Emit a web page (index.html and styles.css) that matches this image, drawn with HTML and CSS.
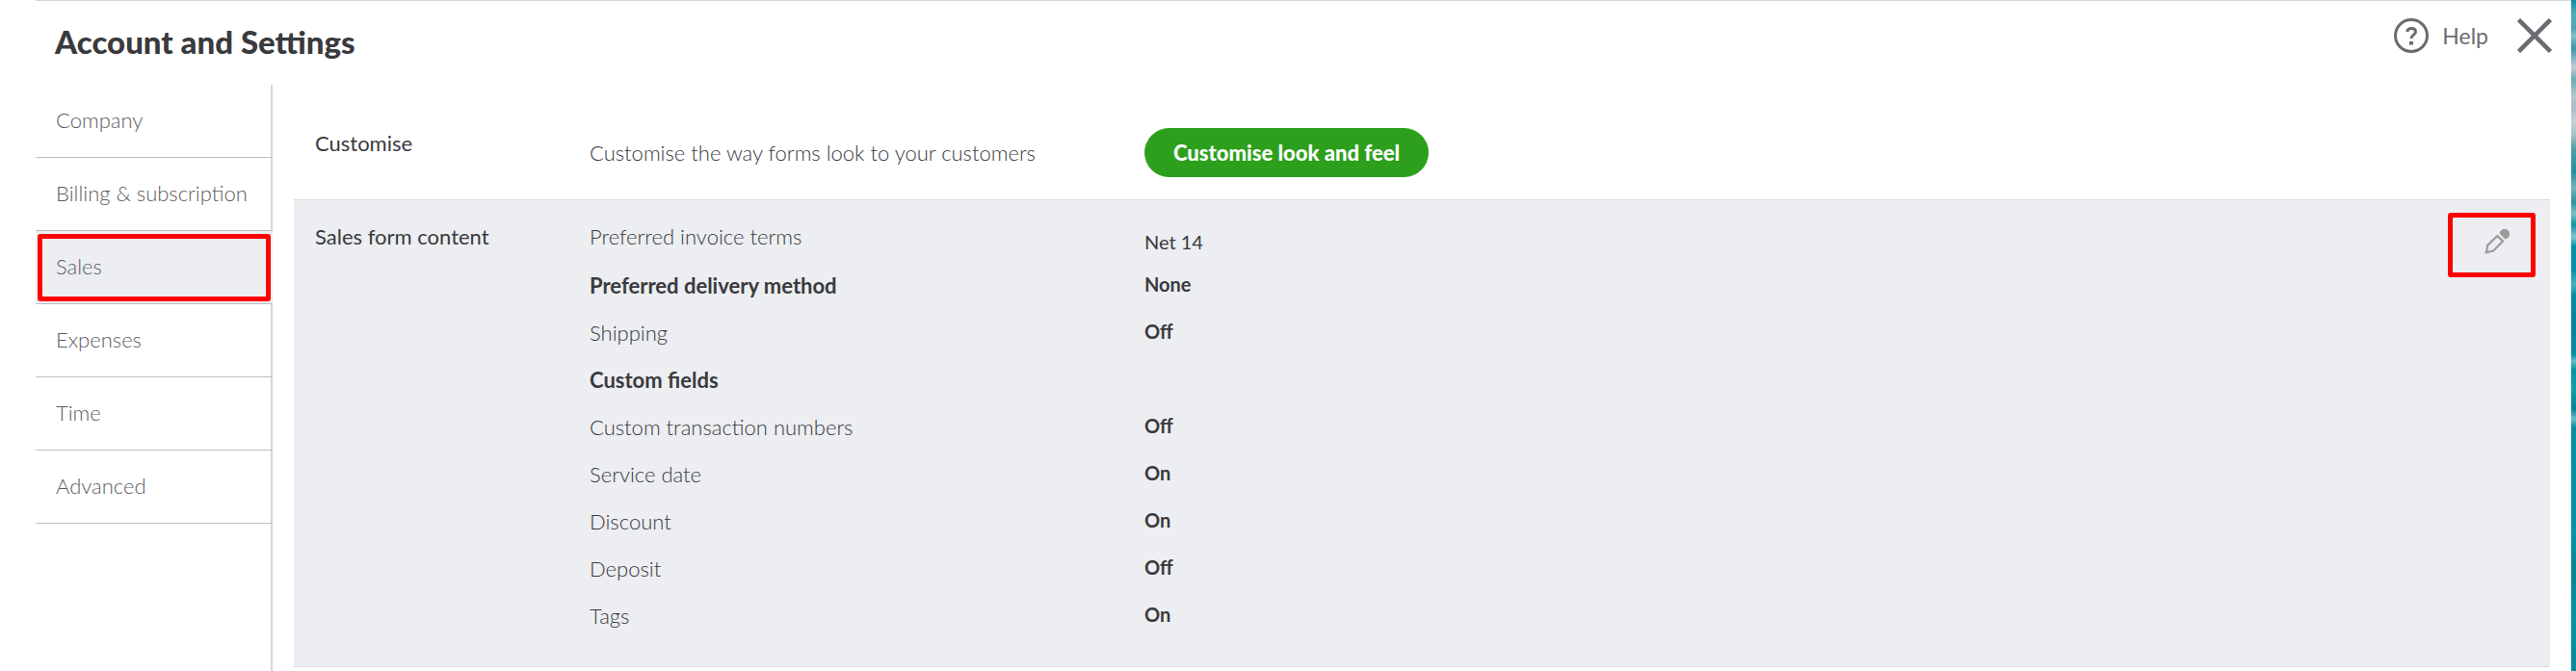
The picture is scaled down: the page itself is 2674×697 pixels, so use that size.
FILE: index.html
```html
<!DOCTYPE html>
<html lang="en">
<head>
<meta charset="utf-8">
<title>Account and Settings</title>
<link rel="stylesheet" href="styles.css">
</head>
<body>
<div class="app">
  <div class="dialog">
    <header class="header">
      <h1 class="title">Account and Settings</h1>
      <div class="actions">
        <a class="help" href="#help">
          <svg class="icon-help" viewBox="0 0 36 36" aria-hidden="true">
            <circle cx="18" cy="18" r="16.5" fill="none" stroke="#6b6c72" stroke-width="3"/>
            <path d="M13.700 13.900c.4-2.200 2-3.400 4.500-3.400 2.700 0 4.300 1.400 4.300 3.500 0 3.600-4.500 3-4.500 7" fill="none" stroke="#6b6c72" stroke-width="3"/>
            <path d="M16 24h4v3.600h-4z" fill="#6b6c72"/>
          </svg>
          <span>Help</span>
        </a>
        <button class="close" type="button" aria-label="Close">
          <svg class="icon-close" viewBox="0 0 36 36" aria-hidden="true">
            <path d="M1.500 1.500l33 33M34.500 1.500l-33 33" stroke="#6b6c72" stroke-width="4.500"/>
          </svg>
        </button>
      </div>
    </header>
    <div class="body">
      <nav class="sidebar" aria-label="Settings">
        <a class="tab" href="#company">Company</a>
        <a class="tab" href="#billing">Billing &amp; subscription</a>
        <a class="tab tab-active" href="#sales" aria-current="page">Sales</a>
        <a class="tab" href="#expenses">Expenses</a>
        <a class="tab" href="#time">Time</a>
        <a class="tab" href="#advanced">Advanced</a>
      </nav>
      <main class="content">
        <section class="section customise">
          <h2 class="section-title">Customise</h2>
          <p class="description">Customise the way forms look to your customers</p>
          <div><button class="primary" type="button">Customise look and feel</button></div>
        </section>
        <section class="section form-content">
          <h2 class="section-title">Sales form content</h2>
          <dl class="settings">
            <div class="row first"><dt>Preferred invoice terms</dt><dd class="plain">Net 14</dd></div>
            <div class="row"><dt class="strong">Preferred delivery method</dt><dd>None</dd></div>
            <div class="row"><dt>Shipping</dt><dd>Off</dd></div>
            <div class="row"><dt class="strong">Custom fields</dt><dd></dd></div>
            <div class="row"><dt>Custom transaction numbers</dt><dd>Off</dd></div>
            <div class="row"><dt>Service date</dt><dd>On</dd></div>
            <div class="row"><dt>Discount</dt><dd>On</dd></div>
            <div class="row"><dt>Deposit</dt><dd>Off</dd></div>
            <div class="row"><dt>Tags</dt><dd>On</dd></div>
          </dl>
          <button class="edit" type="button" aria-label="Edit sales form content">
            <svg class="icon-edit" viewBox="0 0 26 26" aria-hidden="true">
              <path d="M1.800 24.200l1.500-7.600L13.400 7l5.600 5.600L9.200 22.600z" fill="none" stroke="#9c9c9c" stroke-width="2.200"/>
              <path d="M15.600 4.600a5.300 5.300 0 1 1 5.800 5.800z" fill="#9c9c9c"/>
            </svg>
          </button>
        </section>
      </main>
    </div>
  </div>
  <div class="backdrop"></div>
</div>
</body>
</html>
```

FILE: styles.css
```css
* { box-sizing: border-box; }

body {
  margin: 0;
  background: #fff;
  color: #393a3d;
  font-family: Lato, "Open Sans", sans-serif;
  font-size: 22px;
  line-height: 28px;
}

h1, h2, p, dl, dd { margin: 0; }

.app {
  display: grid;
  grid-template-columns: 1fr 5px;
  min-height: 100vh;
}

.dialog {
  display: flex;
  flex-direction: column;
  margin-left: 37px;
  border-top: 1px solid #d4d7dc;
}

.header {
  display: flex;
  justify-content: space-between;
  height: 87px;
  padding: 18px 20px 0;
}

.title {
  font-size: 33px;
  font-weight: 900;
  line-height: 48px;
}

.actions {
  display: flex;
  align-items: center;
  gap: 30px;
  height: 36px;
}

.help {
  display: flex;
  align-items: center;
  gap: 14px;
  color: #6b6c72;
  font-size: 23px;
  text-decoration: none;
}

.icon-help, .icon-close { display: block; width: 36px; height: 36px; }

.close, .edit {
  padding: 0;
  border: 0;
  background: none;
}

.body {
  display: grid;
  grid-template-columns: 246px 1fr;
  flex: 1;
}

.sidebar { border-right: 2px solid #d4d7dc; }

.tab {
  display: flex;
  align-items: center;
  height: 76px;
  margin-right: -2px;
  padding: 0 0 1px 21px;
  border-bottom: 1px solid #babec5;
  color: #5c5d63;
  font-weight: 300;
  text-decoration: none;
}

.tab-active {
  position: relative;
  background: #eceef1;
}

.tab-active::after {
  content: "";
  position: absolute;
  inset: 3px 2px 2px;
  border: 5px solid #f00;
  border-radius: 3px;
}

.content { margin: 0 22px; }

.section {
  display: grid;
  grid-template-columns: 285px 576px 1fr;
  padding-left: 22px;
  border-bottom: 1px solid #d9dcdc;
}

.section-title {
  font-size: 22px;
  font-weight: 400;
  line-height: 28px;
}

.customise { padding-top: 45px; padding-bottom: 23px; }
.customise .section-title { padding-top: 2px; }

.description {
  padding-top: 12px;
  font-weight: 300;
}

.primary {
  display: block;
  height: 51px;
  padding: 0 30px;
  border: 0;
  border-radius: 26px;
  background: #2ca01c;
  color: #fff;
  font: 900 22px/28px Lato, "Open Sans", sans-serif;
}

.form-content {
  position: relative;
  grid-template-columns: 285px 1fr;
  padding-top: 24px;
  padding-bottom: 17px;
  background: #eceef1;
}

.row {
  display: grid;
  grid-template-columns: 576px 1fr;
  height: 49px;
}

.first { height: 51px; }

dt { font-weight: 300; }

.strong { font-weight: 700; }

dd { font-size: 20px; font-weight: 700; line-height: 24px; }

.plain { padding-top: 7px; font-weight: 400; }

.edit {
  position: absolute;
  top: 13px;
  right: 15px;
  display: grid;
  place-items: center;
  width: 91px;
  height: 67px;
  padding-left: 10px;
  padding-bottom: 8px;
  border: 5px solid #f00;
  border-radius: 3px;
}

.icon-edit { width: 26px; height: 26px; }

.backdrop {
  background: linear-gradient(
    #0b8ba0 0, #4fb0b8 15px, #4fa3b3 30px, #86bfcc 37px, #3c96a8 50px,
    #c3cdd8 70px, #6aabb0 82px, #b4c9cc 100px, #a9bccb 112px, #c6d0d2 125px,
    #a5c4c4 140px, #4c9fa8 155px, #1f8e9e 178px, #79b3b8 195px, #2a93a3 210px,
    #7fbfc9 222px, #0a95a5 233px, #80c8cf 246px, #0092a8 256px, #0093ae 280px,
    #45b5bd 296px, #058ca5 306px, #0682a0 340px, #0a8da6 368px, #5fc0c8 375px,
    #0690a4 384px, #0ea0a6 403px, #058595 425px, #66c0c6 435px, #068da0 444px,
    #0595a6 560px, #05838f 590px, #0695a3 640px, #068a98 100%);
}
```
